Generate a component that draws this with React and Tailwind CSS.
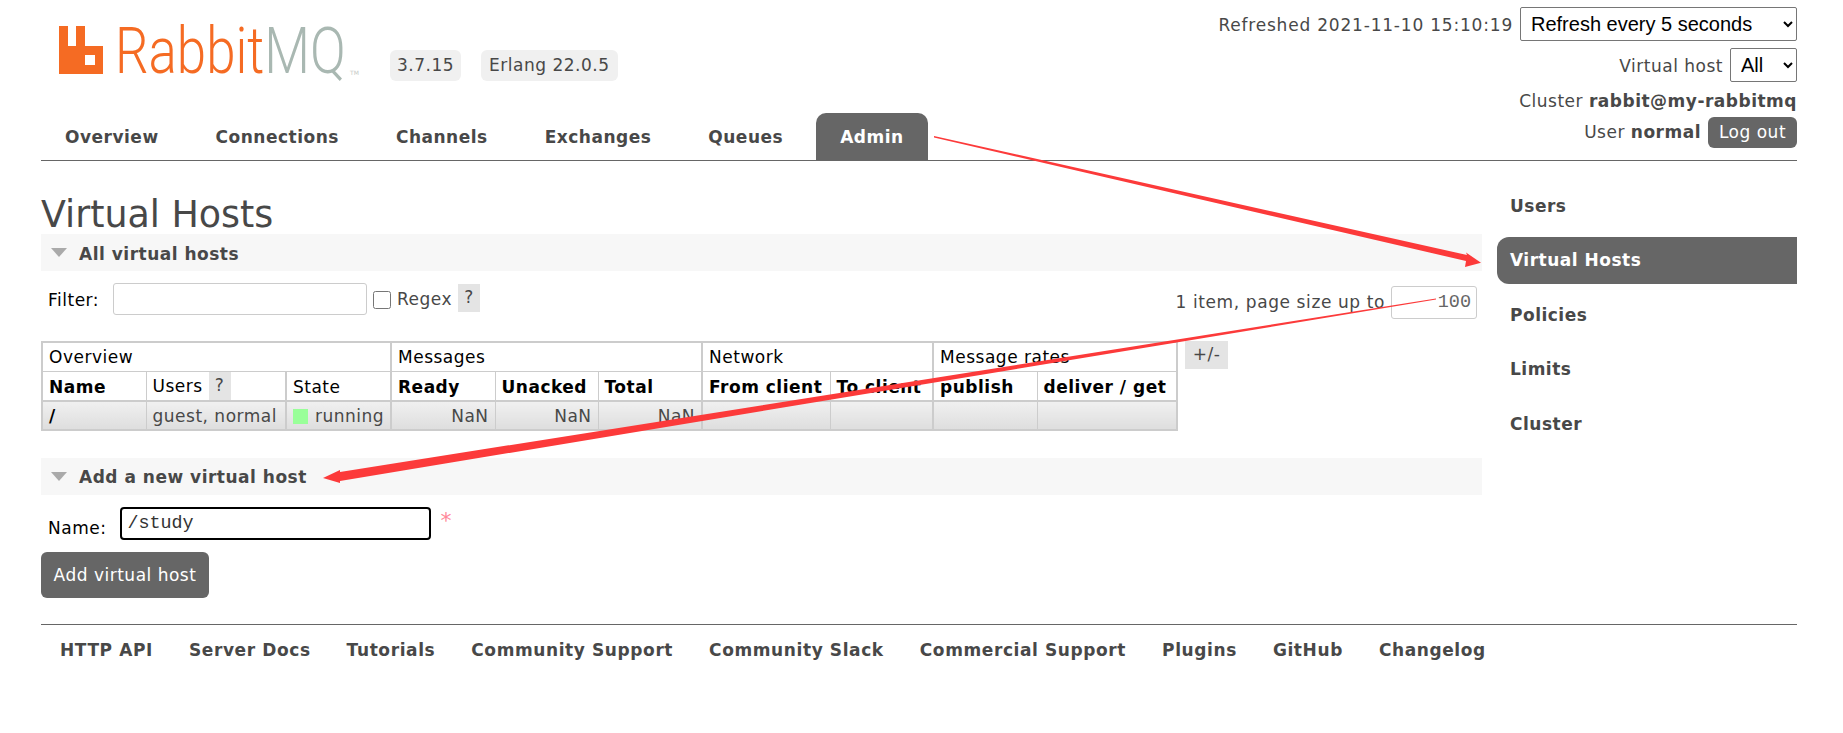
const NAV = ['Overview', 'Connections', 'Channels', 'Exchanges', 'Queues'];
const SIDE_NAV = ['Policies', 'Limits', 'Cluster'];
const FOOTER = ['HTTP API', 'Server Docs', 'Tutorials', 'Community Support', 'Community Slack', 'Commercial Support', 'Plugins', 'GitHub', 'Changelog'];

function Logo() {
  return (
    <div className="flex items-start w-[331px] h-[52px] pl-[18px] pt-[3px]">
      <svg width="44" height="48" viewBox="0 0 44 48" className="shrink-0">
        <path
          fillRule="evenodd"
          fill="#f56b23"
          d="M0 0h9v20h8V0h9v20h18v28H0z M26 29v10h10V29z"
        />
      </svg>
      <span className="inline-block w-[232px] origin-left scale-x-[0.825] font-['Roboto',sans-serif] font-light text-[64px] leading-[50px] text-[#f56b23] ml-[12px] mt-[1px] tracking-normal whitespace-nowrap">
        Rabbit<span className="text-[#a9b8b2]">MQ</span>
      </span>
      <span className="text-[6px] tracking-normal text-[#c4c9c6] mt-[42px] ml-[3px]">TM</span>
    </div>
  );
}

function Help() {
  return <span className="inline-flex items-center justify-center w-[22px] h-[28px] bg-[#e4e4e4] text-[#484848] text-[17px]">?</span>;
}

function SectionBar({ title }) {
  return (
    <div className="flex items-center h-[37px] bg-[#f7f7f7] pl-[10px] font-bold text-[17px] text-[#484848]">
      <span className="w-0 h-0 border-l-[8px] border-r-[8px] border-t-[9px] border-l-transparent border-r-transparent border-t-[#aaaaaa] mr-[12px]" />
      <span className="pt-[4px]">{title}</span>
    </div>
  );
}

function Arrows() {
  return (
    <svg width="1843" height="733" className="absolute left-0 top-0 pointer-events-none">
      <polygon fill="#fc3a3a" points="934,136 934,137.5 1466,261 1465,267 1481,262.7 1466,252.5 1467,255" />
      <polygon fill="#fc3a3a" points="1436,298.5 1436,299.5 340,481 340,483 323,478 340,470 340,472" />
    </svg>
  );
}

const thBase = 'border border-[#cccccc] border-b-2 px-[6px] h-[29px] text-left text-[17px] text-black align-middle';
const th = `${thBase} pt-[2px] leading-[24px] font-bold`;
const group = 'border-2 border-[#cccccc] border-b-[1px] px-[6px] pt-[1px] leading-[24px] h-[29px] text-left font-normal text-[17px] text-black align-middle';
const td = 'border border-[#cccccc] px-[6px] pt-[2px] leading-[24px] h-[29px] bg-gradient-to-b from-[#f0f0f0] to-[#dedede] text-[17px] text-[#484848] align-middle';
const selectCls = "h-[34px] border border-[#767676] rounded-[2px] bg-white text-black font-['Liberation_Sans',sans-serif] text-[20px] tracking-normal pl-[6px]";

export default function App() {
  return (
    <div className="relative w-[1843px] h-[733px] overflow-hidden bg-white text-[#484848] text-[17px] tracking-[0.5px] font-['DejaVu_Sans',sans-serif] px-[41px]">
      <div className="w-[1756px]">
        {/* Header */}
        <div className="relative flex justify-between h-[161px] border-b border-[#666666]">
          <div className="flex flex-col justify-between">
            <div className="flex items-start pt-[23px]">
              <Logo />
              <span className="mt-[27px] ml-[18px] h-[31px] px-[7px] flex items-center rounded-[6px] bg-[#f0f0f0]">3.7.15</span>
              <span className="mt-[27px] ml-[20px] h-[31px] px-[8px] flex items-center rounded-[6px] bg-[#f0f0f0]">Erlang 22.0.5</span>
            </div>
            <div className="flex items-end gap-[9px] h-[48px] font-bold">
              {NAV.map((item) => (
                <span key={item} className="h-[47px] pt-[2px] flex items-center px-[24px]">{item}</span>
              ))}
              <span className="h-[47px] pt-[2px] flex items-center px-[24px] bg-[#666666] text-white rounded-t-[10px]">Admin</span>
            </div>
          </div>
          <div className="flex flex-col items-end pt-[7px]">
            <div className="flex items-center gap-[7px]">
              <span className="tracking-[0.8px] pt-[3px]">Refreshed 2021-11-10 15:10:19</span>
              <select className={`w-[277px] ${selectCls}`}>
                <option>Refresh every 5 seconds</option>
              </select>
            </div>
            <div className="flex items-center gap-[7px] mt-[7px]">
              <span className="pt-[3px]">Virtual host</span>
              <select className={`w-[67px] ${selectCls}`}>
                <option>All</option>
              </select>
            </div>
            <div className="mt-[8px] h-[22px] leading-[22px]">Cluster <b>rabbit@my-rabbitmq</b></div>
            <div className="flex items-center gap-[7px] mt-[5px]">
              <span className="pt-[1px]">User <b>normal</b></span>
              <span className="h-[31px] w-[89px] flex items-center justify-center rounded-[6px] bg-[#666666] text-white">Log out</span>
            </div>
          </div>
        </div>

        {/* Main */}
        <div className="flex h-[464px] border-b border-[#666666]">
          <div className="w-[1441px]">
            <h1 className="text-[36.4px] tracking-normal leading-[40px] pt-[34px] h-[73px] font-normal text-[#484848]">Virtual Hosts</h1>
            <SectionBar title="All virtual hosts" />
            <div className="flex items-start justify-between h-[70px] pr-[5px]">
              <div className="flex items-start pt-[12px] pl-[7px] text-black">
                <span className="leading-[32px] pt-[1px]">Filter:</span>
                <div className="ml-[14px] w-[254px] h-[32px] rounded-[3px] border border-[#cccccc] bg-white" />
                <input type="checkbox" readOnly className="ml-[6px] mt-[8px] w-[18px] h-[18px]" />
                <span className="ml-[6px] text-[#484848] leading-[30px] pt-[1px]">Regex</span>
                <span className="ml-[6px] mt-[1px]"><Help /></span>
              </div>
              <div className="flex items-start pt-[15px]">
                <span className="leading-[30px] tracking-[0.6px] pt-[1px]">1 item, page size up to</span>
                <div className="ml-[6px] w-[86px] h-[33px] rounded-[3px] border border-[#cccccc] bg-white flex items-center justify-end pr-[5px] font-['Liberation_Mono',monospace] tracking-normal text-[18.5px] text-[#666666]">100</div>
              </div>
            </div>
            <div className="flex items-start">
              <table className="border-collapse border-2 border-[#cccccc] table-fixed w-[1135px]">
                <colgroup>
                  {[104, 140, 105, 104, 103, 104, 128, 103, 104, 140].map((w, i) => <col key={i} style={{ width: w }} />)}
                </colgroup>
                <thead>
                  <tr>
                    <th colSpan={3} className={group}>Overview</th>
                    <th colSpan={3} className={group}>Messages</th>
                    <th colSpan={2} className={group}>Network</th>
                    <th colSpan={2} className={group}>Message rates</th>
                  </tr>
                  <tr>
                    <th className={th}>Name</th>
                    <th className={`${thBase} border-r-2 font-normal`}>
                      <span className="flex items-center gap-[6px]"><span className="pt-[2px]">Users</span> <Help /></span>
                    </th>
                    <th className={`${th} border-r-2`}><span className="font-normal">State</span></th>
                    <th className={th}>Ready</th>
                    <th className={th}>Unacked</th>
                    <th className={`${th} border-r-2`}>Total</th>
                    <th className={`${th} whitespace-nowrap`}>From client</th>
                    <th className={`${th} border-r-2 whitespace-nowrap`}>To client</th>
                    <th className={th}>publish</th>
                    <th className={`${th} whitespace-nowrap`}>deliver / get</th>
                  </tr>
                </thead>
                <tbody>
                  <tr>
                    <td className={`${td} font-bold text-black`}>/</td>
                    <td className={`${td} border-r-2 whitespace-nowrap`}>guest, normal</td>
                    <td className={`${td} border-r-2 whitespace-nowrap`}>
                      <span className="inline-block w-[15px] h-[15px] bg-[#99ff99] align-[-2px] mr-[7px]" />running
                    </td>
                    <td className={`${td} text-right`}>NaN</td>
                    <td className={`${td} text-right`}>NaN</td>
                    <td className={`${td} border-r-2 text-right`}>NaN</td>
                    <td className={td} />
                    <td className={`${td} border-r-2`} />
                    <td className={td} />
                    <td className={td} />
                  </tr>
                </tbody>
              </table>
              <span className="ml-[7px] w-[43px] h-[28px] flex items-center justify-center bg-[#e4e4e4] text-[#484848]">+/-</span>
            </div>
            <div className="mt-[27px]">
              <SectionBar title="Add a new virtual host" />
            </div>
            <div className="flex items-start h-[57px] pt-[12px] pl-[7px]">
              <span className="text-black mt-[9px]">Name:</span>
              <div className="ml-[14px] w-[311px] h-[33px] border-2 border-black rounded-[4px] bg-white flex items-center pl-[5px] pt-[1px] font-['Liberation_Mono',monospace] tracking-normal text-[18.4px] text-[#333333]">/study</div>
              <span className="ml-[9px] mt-[2px] text-[#ff8899] text-[22px] leading-[24px]">*</span>
            </div>
            <div className="w-[168px] h-[46px] pt-[2px] rounded-[6px] bg-[#666666] text-white flex items-center justify-center">Add virtual host</div>
          </div>
          <div className="ml-[15px] w-[300px] pt-[23px] font-bold">
            <div className="h-[46px] flex items-center pl-[13px]">Users</div>
            <div className="h-[47px] mt-[7px] flex items-center pl-[13px] bg-[#666666] text-white rounded-l-[12px]">Virtual Hosts</div>
            {SIDE_NAV.map((item) => (
              <div key={item} className="h-[47px] mt-[7.6px] flex items-center pl-[13px] pt-[1px]">{item}</div>
            ))}
          </div>
        </div>

        {/* Footer */}
        <div className="flex items-center h-[52px] pl-[19px] gap-[36px] font-bold tracking-[0.6px]">
          {FOOTER.map((item) => <span key={item}>{item}</span>)}
        </div>
      </div>
      <Arrows />
    </div>
  );
}
